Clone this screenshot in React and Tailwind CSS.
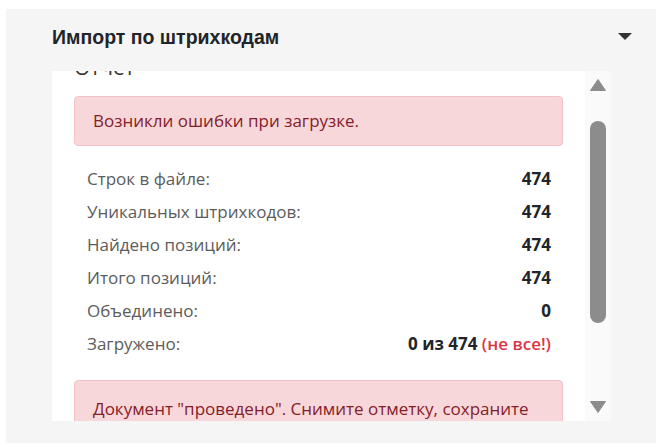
import React from 'react';

const rows = [
  { label: 'Строк в файле:', value: '474' },
  { label: 'Уникальных штрихкодов:', value: '474' },
  { label: 'Найдено позиций:', value: '474' },
  { label: 'Итого позиций:', value: '474' },
  { label: 'Объединено:', value: '0' },
];

const Scrollbar = () => (
  <div className="w-[26px] shrink-0 bg-[#fafafa] flex flex-col items-center pt-[8px] pb-[8px]">
    <svg width="16" height="12" viewBox="0 0 16 12">
      <path d="M8 0.5 L15.5 11.5 L0.5 11.5 Z" fill="#8c8c8c" strokeLinejoin="round" stroke="#8c8c8c" strokeWidth="1" />
    </svg>
    <div className="mt-[30px] w-[16px] h-[202px] rounded-full bg-[#8c8c8c]" />
    <div className="flex-1" />
    <svg width="16" height="12" viewBox="0 0 16 12">
      <path d="M0.5 0.5 L15.5 0.5 L8 11.5 Z" fill="#8c8c8c" strokeLinejoin="round" stroke="#8c8c8c" strokeWidth="1" />
    </svg>
  </div>
);

const App = () => {
  return (
    <div className="w-[663px] h-[448px] bg-white pt-[9px] pl-[6px]" style={{ fontFamily: '"Open Sans", sans-serif' }}>
      <div className="w-[650px] h-[434px] bg-[#f5f5f5] flex flex-col">
        <div className="h-[62px] shrink-0 flex items-start justify-between pl-[46px] pr-[24px] pt-[15px]">
          <h1 className="text-[19.5px] leading-[26px] font-bold text-[#212529]" style={{ fontFamily: '"Liberation Sans", Arial, sans-serif' }}>
            Импорт по штрихкодам
          </h1>
          <svg width="14" height="7" viewBox="0 0 14 7" className="mt-[9px]">
            <path d="M0 0 L14 0 L7 7 Z" fill="#333" />
          </svg>
        </div>

        <div className="ml-[46px] w-[559px] h-[350px] bg-white flex">
          <div className="flex-1 overflow-hidden">
            <div className="-mt-[18px] px-[22px]">
              <h2 className="text-[21px] leading-[28px] text-[#333] mb-[15px]">Отчет</h2>

              <div className="bg-[#f8d7da] border border-[#f5c2c7] rounded-[4px] h-[50px] flex items-center px-[18px] text-[17px] text-[#842029]">
                Возникли ошибки при загрузке.
              </div>

              <div className="mt-[16px] pl-[13px] pr-[12px] text-[17px]">
                {rows.map((row) => (
                  <div key={row.label} className="h-[33px] flex items-center justify-between">
                    <span className="text-[#5c5c5c]">{row.label}</span>
                    <span className="font-bold text-[#212529]">{row.value}</span>
                  </div>
                ))}
                <div className="h-[33px] flex items-center justify-between">
                  <span className="text-[#5c5c5c]">Загружено:</span>
                  <span>
                    <span className="font-bold text-[#212529]">0 из 474</span>{' '}
                    <span className="font-semibold text-[#dc3545]">(не все!)</span>
                  </span>
                </div>
              </div>

              <div className="mt-[20px] bg-[#f8d7da] border border-[#f5c2c7] rounded-[4px] pt-[15px] pb-[16px] px-[18px] text-[17px] leading-[26px] text-[#842029]">
                Документ "проведено". Снимите отметку, сохраните документ и повторите загрузку.
              </div>
            </div>
          </div>
          <Scrollbar />
        </div>
      </div>
    </div>
  );
};

export default App;
